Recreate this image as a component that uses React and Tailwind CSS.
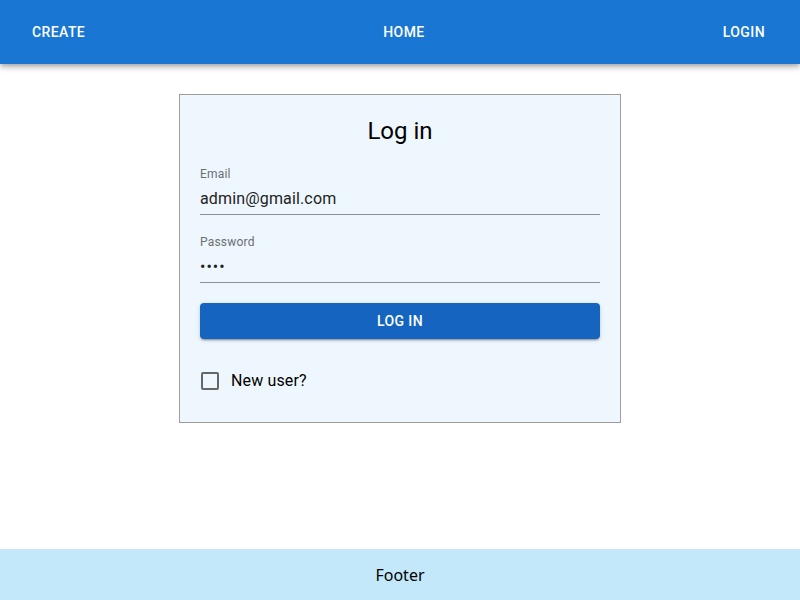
export default function App() {
  return (
    <div className="min-h-screen flex flex-col bg-white" style={{ fontFamily: 'Roboto, "Liberation Sans", sans-serif' }}>
      <header className="h-16 bg-[#1976d2] flex items-center justify-between pl-8 pr-[35px] text-white text-sm font-medium uppercase tracking-[0.4px] shadow-[0_2px_4px_-1px_rgba(0,0,0,0.2),0_4px_5px_0_rgba(0,0,0,0.14),0_1px_10px_0_rgba(0,0,0,0.12)] relative z-10">
        <span>Create</span>
        <span>Home</span>
        <span>Login</span>
      </header>
      <main className="flex-1 flex justify-center pt-[30px]">
        <div className="w-[442px] h-[329px] border border-[#9e9e9e] bg-[#eef7fe] px-5 pt-5 flex flex-col">
          <h1 className="text-2xl leading-8 text-center text-black">Log in</h1>
          <div className="mt-5">
            <div className="text-xs leading-[14px] text-[#6b6e72] tracking-[0.2px]">Email</div>
            <div className="mt-[2px] border-b border-[#8c9094] pt-1 pb-[4px] text-base leading-[23px] text-[#222] tracking-[0.15px]">admin@gmail.com</div>
          </div>
          <div className="mt-5">
            <div className="text-xs leading-[14px] text-[#6b6e72] tracking-[0.2px]">Password</div>
            <div className="mt-[2px] border-b border-[#8c9094] pt-1 pb-[4px] text-base leading-[23px] text-[#222] tracking-[1px]">••••</div>
          </div>
          <button className="mt-5 h-9 rounded bg-[#1565c0] text-white text-sm font-medium uppercase tracking-[0.4px] shadow-[0_3px_1px_-2px_rgba(0,0,0,0.2),0_2px_2px_0_rgba(0,0,0,0.14),0_1px_5px_0_rgba(0,0,0,0.12)]">
            Log in
          </button>
          <label className="mt-[21px] h-[42px] flex items-center">
            <span className="ml-px w-[18px] h-[18px] border-2 border-[#666] rounded-[2px]"></span>
            <span className="ml-3 text-base text-black tracking-[0.15px]">New user?</span>
          </label>
        </div>
      </main>
      <footer className="h-[51px] bg-[#c2e8fa] flex items-center justify-center text-base text-black" style={{ fontFamily: '"Noto Sans", sans-serif' }}>
        Footer
      </footer>
    </div>
  );
}
